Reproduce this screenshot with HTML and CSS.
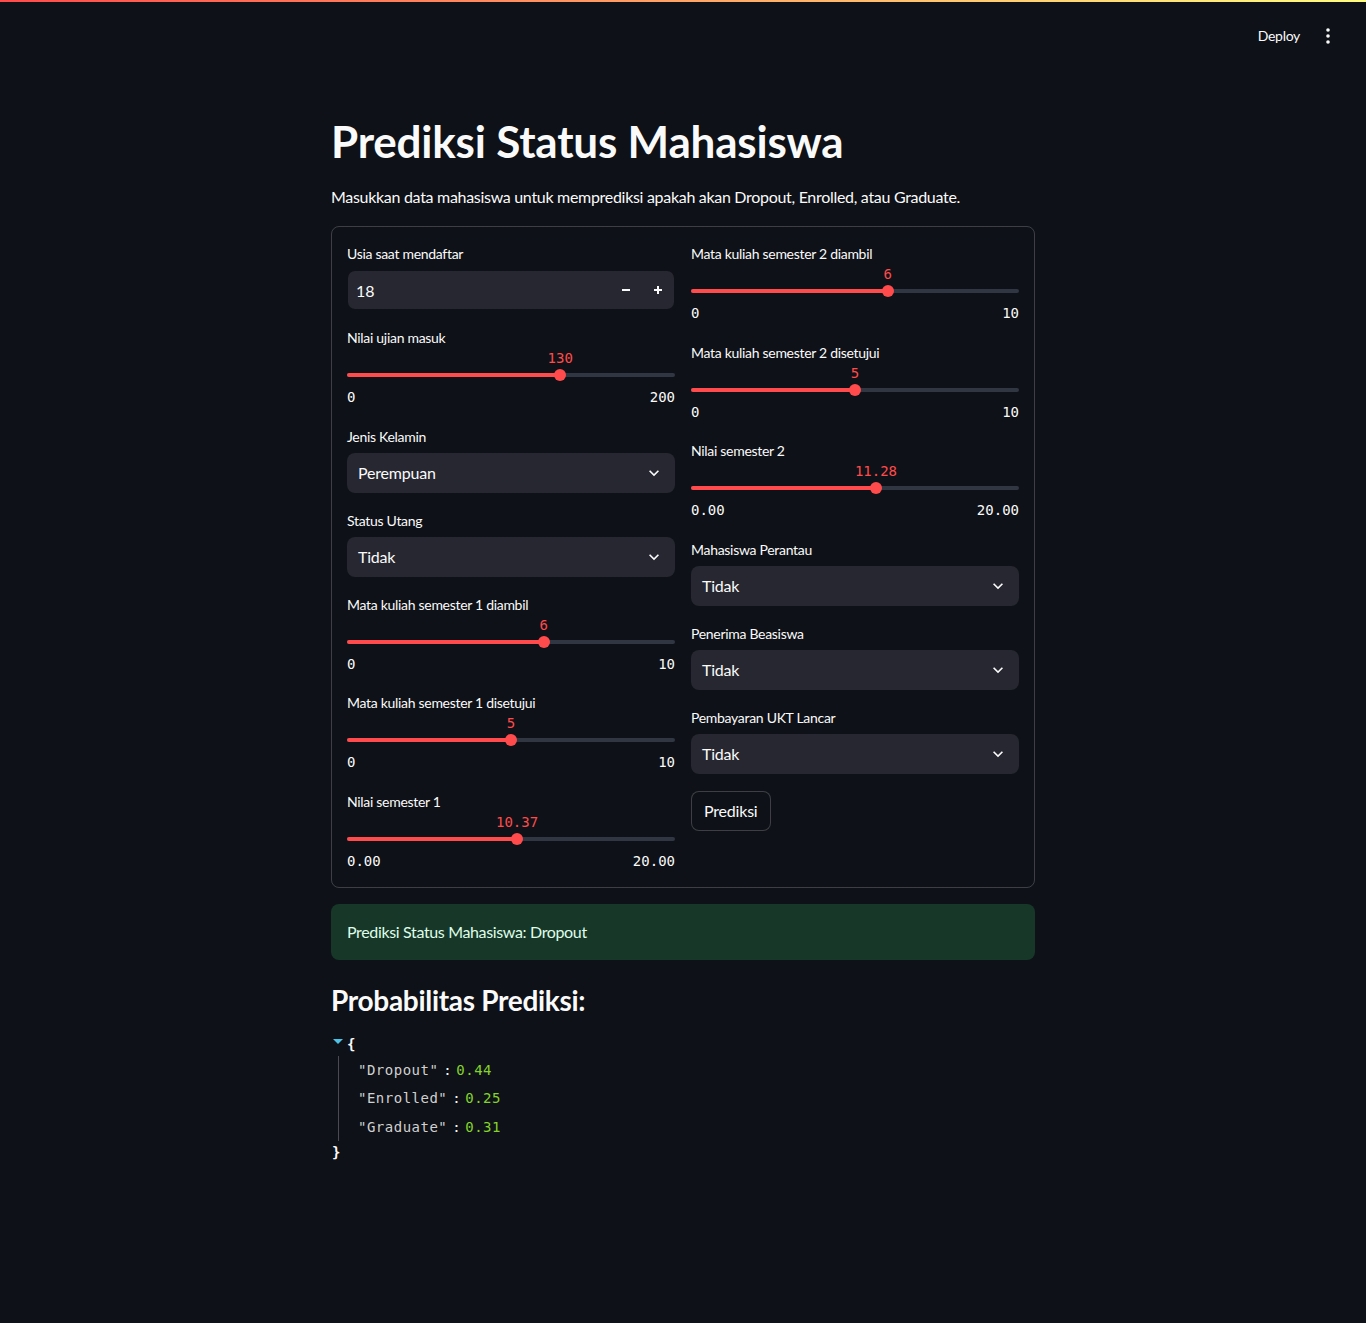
FILE: index.html
```html
<!DOCTYPE html>
<html lang="id">
<head>
<meta charset="utf-8">
<title>Prediksi Status Mahasiswa</title>
<link rel="stylesheet" href="styles.css">
</head>
<body>
<div class="topline"></div>
<header class="header">
  <span class="deploy">Deploy</span>
  <span class="menu">
    <svg width="4" height="16" viewBox="0 0 4 16"><circle cx="2" cy="2" r="1.8" fill="#fafafa"/><circle cx="2" cy="8" r="1.8" fill="#fafafa"/><circle cx="2" cy="14" r="1.8" fill="#fafafa"/></svg>
  </span>
</header>
<main class="main">
  <h1 class="title">Prediksi Status Mahasiswa</h1>
  <p class="lead">Masukkan data mahasiswa untuk memprediksi apakah akan Dropout, Enrolled, atau Graduate.</p>

  <form class="form">
    <div class="cols">
      <div class="col">
        <div class="field">
          <div class="label">Usia saat mendaftar</div>
          <div class="numbox">
            <span class="numval">18</span>
            <span class="step"><svg width="10" height="10" viewBox="0 0 10 10"><path d="M1 5h8" stroke="#fafafa" stroke-width="2"/></svg></span>
            <span class="step"><svg width="10" height="10" viewBox="0 0 10 10"><path d="M1 5h8M5 1v8" stroke="#fafafa" stroke-width="2"/></svg></span>
          </div>
        </div>

        <div class="slider">
          <div class="label">Nilai ujian masuk</div>
          <div class="valrow"><span class="val" style="left:65%">130</span></div>
          <div class="track"><div class="fill" style="width:65%"></div><div class="thumb" style="left:65%"></div></div>
          <div class="ticks"><span>0</span><span>200</span></div>
        </div>

        <div class="field">
          <div class="label">Jenis Kelamin</div>
          <div class="select"><span>Perempuan</span><svg class="chev" width="20" height="20" viewBox="0 0 24 24"><path d="M16.59 8.59 12 13.17 7.41 8.59 6 10l6 6 6-6z" fill="#fafafa"/></svg></div>
        </div>

        <div class="field">
          <div class="label">Status Utang</div>
          <div class="select"><span>Tidak</span><svg class="chev" width="20" height="20" viewBox="0 0 24 24"><path d="M16.59 8.59 12 13.17 7.41 8.59 6 10l6 6 6-6z" fill="#fafafa"/></svg></div>
        </div>

        <div class="slider">
          <div class="label">Mata kuliah semester 1 diambil</div>
          <div class="valrow"><span class="val" style="left:60%">6</span></div>
          <div class="track"><div class="fill" style="width:60%"></div><div class="thumb" style="left:60%"></div></div>
          <div class="ticks"><span>0</span><span>10</span></div>
        </div>

        <div class="slider">
          <div class="label">Mata kuliah semester 1 disetujui</div>
          <div class="valrow"><span class="val" style="left:50%">5</span></div>
          <div class="track"><div class="fill" style="width:50%"></div><div class="thumb" style="left:50%"></div></div>
          <div class="ticks"><span>0</span><span>10</span></div>
        </div>

        <div class="slider">
          <div class="label">Nilai semester 1</div>
          <div class="valrow"><span class="val" style="left:51.85%">10.37</span></div>
          <div class="track"><div class="fill" style="width:51.85%"></div><div class="thumb" style="left:51.85%"></div></div>
          <div class="ticks"><span>0.00</span><span>20.00</span></div>
        </div>
      </div>

      <div class="col">
        <div class="slider">
          <div class="label">Mata kuliah semester 2 diambil</div>
          <div class="valrow"><span class="val" style="left:60%">6</span></div>
          <div class="track"><div class="fill" style="width:60%"></div><div class="thumb" style="left:60%"></div></div>
          <div class="ticks"><span>0</span><span>10</span></div>
        </div>

        <div class="slider">
          <div class="label">Mata kuliah semester 2 disetujui</div>
          <div class="valrow"><span class="val" style="left:50%">5</span></div>
          <div class="track"><div class="fill" style="width:50%"></div><div class="thumb" style="left:50%"></div></div>
          <div class="ticks"><span>0</span><span>10</span></div>
        </div>

        <div class="slider">
          <div class="label">Nilai semester 2</div>
          <div class="valrow"><span class="val" style="left:56.4%">11.28</span></div>
          <div class="track"><div class="fill" style="width:56.4%"></div><div class="thumb" style="left:56.4%"></div></div>
          <div class="ticks"><span>0.00</span><span>20.00</span></div>
        </div>

        <div class="field">
          <div class="label">Mahasiswa Perantau</div>
          <div class="select"><span>Tidak</span><svg class="chev" width="20" height="20" viewBox="0 0 24 24"><path d="M16.59 8.59 12 13.17 7.41 8.59 6 10l6 6 6-6z" fill="#fafafa"/></svg></div>
        </div>

        <div class="field">
          <div class="label">Penerima Beasiswa</div>
          <div class="select"><span>Tidak</span><svg class="chev" width="20" height="20" viewBox="0 0 24 24"><path d="M16.59 8.59 12 13.17 7.41 8.59 6 10l6 6 6-6z" fill="#fafafa"/></svg></div>
        </div>

        <div class="field">
          <div class="label">Pembayaran UKT Lancar</div>
          <div class="select"><span>Tidak</span><svg class="chev" width="20" height="20" viewBox="0 0 24 24"><path d="M16.59 8.59 12 13.17 7.41 8.59 6 10l6 6 6-6z" fill="#fafafa"/></svg></div>
        </div>

        <div class="btnrow"><button type="button" class="btn">Prediksi</button></div>
      </div>
    </div>
  </form>

  <div class="success">Prediksi Status Mahasiswa: Dropout</div>

  <h3 class="subheader">Probabilitas Prediksi:</h3>

  <div class="json">
    <div class="json-row"><span class="caret"></span><span class="brace">{</span></div>
    <div class="json-body">
      <div class="json-item"><span class="key">"Dropout"</span><span class="colon">:</span><span class="num">0.44</span></div>
      <div class="json-item"><span class="key">"Enrolled"</span><span class="colon">:</span><span class="num">0.25</span></div>
      <div class="json-item"><span class="key">"Graduate"</span><span class="colon">:</span><span class="num">0.31</span></div>
    </div>
    <div class="json-row json-close"><span class="brace">}</span></div>
  </div>
</main>
</body>
</html>
```

FILE: styles.css
```css
* { box-sizing: border-box; }

html, body {
  margin: 0;
  background: #0e1117;
  color: #fafafa;
  font-family: Lato, "Noto Sans", sans-serif;
}

body { min-height: 1323px; }

.topline {
  height: 2px;
  background: linear-gradient(90deg, #ff4b4b, #fffd80);
}

.header {
  height: 58px;
  padding: 10px 36px 0 0;
  display: flex;
  justify-content: flex-end;
  align-items: center;
  gap: 26px;
}

.deploy {
  font-size: 14px;
  line-height: 20px;
  letter-spacing: -0.3px;
  color: #fafafa;
}

.menu { display: flex; align-items: center; }

.main {
  width: 704px;
  margin: 0 auto;
  padding-top: 36px;
  display: flex;
  flex-direction: column;
  gap: 16px;
}

.title {
  margin: 0;
  padding: 19px 0 0;
  font-size: 44px;
  line-height: 1.2;
  font-weight: 700;
  letter-spacing: -0.2px;
}

.lead {
  margin: 0 0 1px;
  font-size: 16px;
  line-height: 25.6px;
  letter-spacing: -0.3px;
}

.form {
  margin: 0;
  border: 1px solid rgba(250, 250, 250, 0.2);
  border-radius: 8px;
  padding: 16px 15px 14px;
}

.cols {
  display: grid;
  grid-template-columns: 1fr 1fr;
  gap: 16px;
  align-items: start;
}

.col {
  display: flex;
  flex-direction: column;
  gap: 16px;
}

.label {
  font-size: 14px;
  line-height: 22px;
  height: 22px;
  letter-spacing: -0.3px;
  color: #fafafa;
}

.field { padding-bottom: 1px; }
.field .label { margin-bottom: 5px; }

.numbox {
  height: 40px;
  border: 1px solid transparent;
  border-radius: 8px;
  background: #262730;
  background-clip: padding-box;
  display: flex;
  align-items: center;
  padding-left: 8px;
}

.numval { flex: 1; font-size: 16px; }

.step {
  width: 32px;
  height: 38px;
  display: flex;
  align-items: center;
  justify-content: center;
}

.select {
  height: 40px;
  border-radius: 8px;
  background: #262730;
  display: flex;
  align-items: center;
  justify-content: space-between;
  padding: 0 11px 0 11px;
  font-size: 16px;
  letter-spacing: -0.2px;
}

.slider { padding-bottom: 3.5px; }

.valrow {
  position: relative;
  height: 18px;
}

.val {
  position: absolute;
  top: 0;
  transform: translateX(-50%);
  font-family: "DejaVu Sans Mono", "Liberation Mono", monospace;
  font-size: 14px;
  line-height: 18px;
  color: #ff4b4b;
  white-space: nowrap;
}

.track {
  position: relative;
  margin-top: 6px;
  height: 4px;
  border-radius: 2px;
  background: #303642;
}

.fill {
  height: 4px;
  border-radius: 2px;
  background: #ff4b4b;
}

.thumb {
  position: absolute;
  top: 50%;
  width: 12px;
  height: 12px;
  border-radius: 50%;
  background: #ff4b4b;
  transform: translate(-50%, -50%);
}

.ticks {
  margin-top: 11px;
  display: flex;
  justify-content: space-between;
  font-family: "DejaVu Sans Mono", "Liberation Mono", monospace;
  font-size: 14px;
  line-height: 18px;
  color: #fafafa;
}

.btnrow { display: flex; }

.btn {
  height: 40px;
  padding: 0 12px;
  border: 1px solid rgba(250, 250, 250, 0.2);
  border-radius: 8px;
  background: #0e1117;
  color: #fafafa;
  font-family: Lato, "Noto Sans", sans-serif;
  font-size: 16px;
  letter-spacing: -0.2px;
}

.success {
  height: 56px;
  padding: 16px;
  border-radius: 8px;
  background: #173828;
  color: #dffde9;
  font-size: 16px;
  line-height: 24px;
  letter-spacing: -0.35px;
}

.subheader {
  margin: 0;
  padding: 8px 0 0;
  font-size: 28px;
  line-height: 33.6px;
  font-weight: 700;
  letter-spacing: -0.3px;
}

.json {
  font-family: "DejaVu Sans Mono", "Liberation Mono", monospace;
  font-size: 14px;
  letter-spacing: 0.5px;
}

.json-row {
  display: flex;
  align-items: center;
  height: 20px;
  line-height: 20px;
}

.caret {
  width: 0;
  height: 0;
  margin: -5px 4px 0 2px;
  border-left: 5px solid transparent;
  border-right: 5px solid transparent;
  border-top: 5px solid #4cc3e6;
}

.brace { color: #fafafa; font-weight: 700; }

.json-body {
  margin: 2px 0 0 7px;
  border-left: 1px solid rgba(250, 250, 250, 0.25);
  padding-left: 19px;
}

.json-item {
  height: 28.5px;
  line-height: 28.5px;
}

.key { color: #d0d0d0; }
.colon { color: #fafafa; padding: 0 4px 0 5px; }
.num { color: #84d32b; }

.json-close { margin-top: 1px; padding-left: 1px; }
```
